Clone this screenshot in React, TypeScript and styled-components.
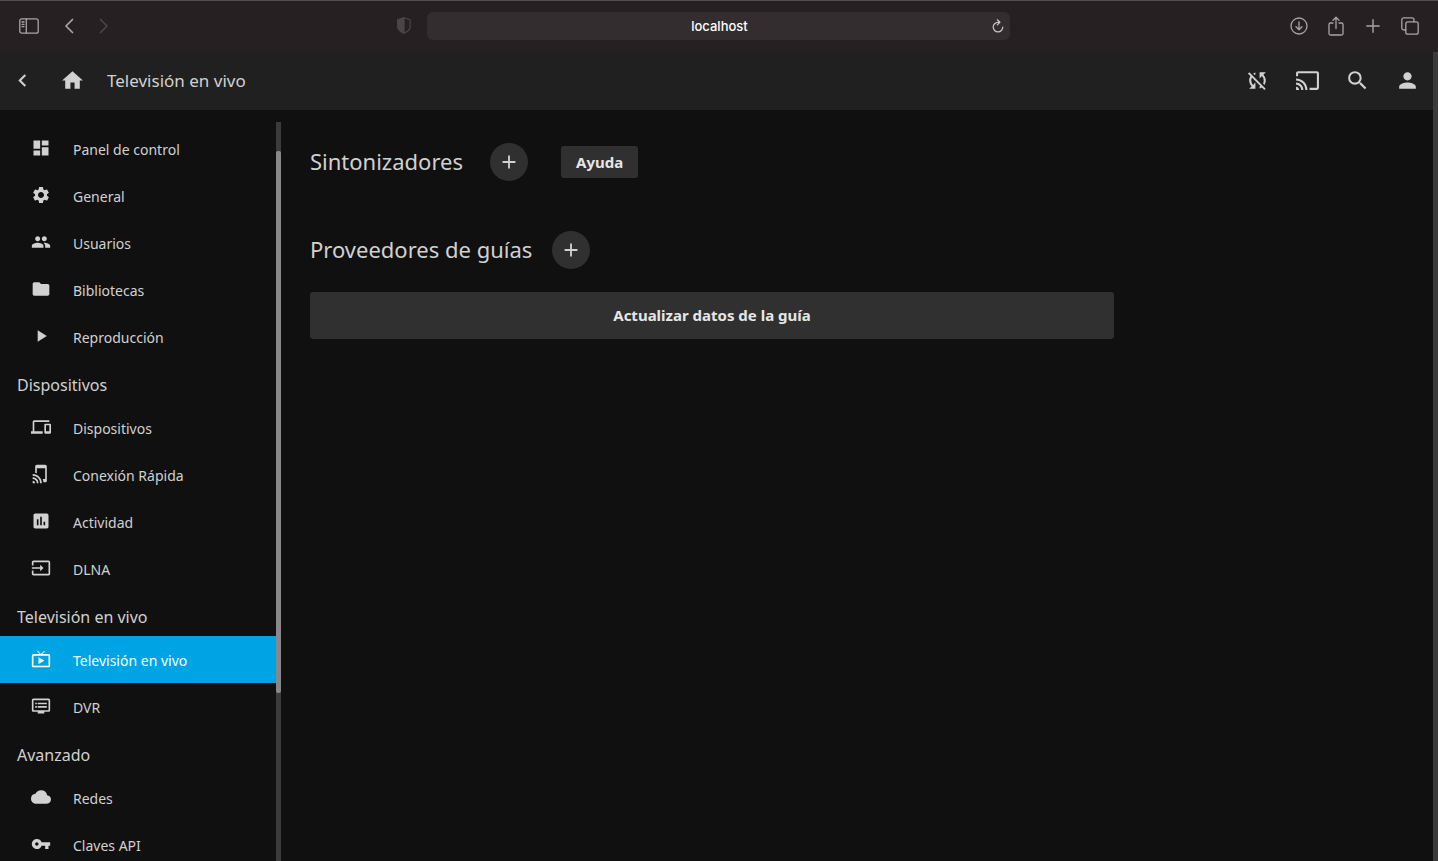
import React from 'react';
import styled, { createGlobalStyle, css } from 'styled-components';
import type { IconType } from 'react-icons';
import {
  MdAdd,
  MdAssessment,
  MdCast,
  MdChevronLeft,
  MdCloud,
  MdDashboard,
  MdDevices,
  MdDvr,
  MdFolder,
  MdHome,
  MdInput,
  MdLiveTv,
  MdPeople,
  MdPerson,
  MdPlayArrow,
  MdSearch,
  MdSettings,
  MdSyncDisabled,
  MdTapAndPlay,
  MdVpnKey,
} from 'react-icons/md';

const GlobalStyle = createGlobalStyle`
  * { box-sizing: border-box; }
  body {
    margin: 0;
    background: #101010;
    color: #d1d1d1;
    font-family: 'Noto Sans', sans-serif;
  }
  button { font-family: inherit; color: inherit; border: 0; padding: 0; background: none; cursor: pointer; }
  h1, h2, ul { margin: 0; padding: 0; font-weight: 400; }
  ul { list-style: none; }
  svg { display: block; }
`;

const Window = styled.div`
  display: flex;
  flex-direction: column;
  height: 100vh;
  overflow: hidden;
`;

/* Browser toolbar */

const Toolbar = styled.div`
  display: grid;
  grid-template-columns: 1fr minmax(200px, 583px) 1fr;
  flex: none;
  align-items: center;
  height: 52px;
  padding: 0 2px 2px 0;
  border-top: 1px solid #504c50;
  background: #262023;
`;

const ToolGroup = styled.div<{ $end?: boolean }>`
  display: flex;
  align-items: center;
  gap: ${(p) => (p.$end ? 16 : 14)}px;
  padding: ${(p) => (p.$end ? '0 16px' : '0 12px 0 18px')};
  justify-content: ${(p) => (p.$end ? 'flex-end' : 'flex-start')};
`;

const ToolButton = styled.button<{ $tone?: 'dim'; $push?: boolean }>`
  display: grid;
  place-items: center;
  width: 21px;
  height: 22px;
  margin-left: ${(p) => (p.$push ? 'auto' : '0')};
  color: ${(p) => (p.$tone ? '#4b4548' : '#a8a4a6')};
`;

const BackButton = styled(ToolButton)`
  margin-left: 5px;
`;

const AddressBar = styled.div`
  display: flex;
  align-items: center;
  height: 28px;
  padding-right: 3px;
  border-radius: 6px;
  background: #332d30;
`;

const Address = styled.input`
  flex: 1;
  min-width: 0;
  padding: 0 0 0 24px;
  border: 0;
  background: none;
  color: #fff;
  font: 500 13px/20px Inter, sans-serif;
  text-align: center;
`;

const ReloadButton = styled(ToolButton)`
  width: 18px;
  color: #c9c6c8;
`;

/* Page */

const Page = styled.div`
  display: flex;
  flex: 1;
  min-height: 0;
`;

const Screen = styled.div`
  display: flex;
  flex-direction: column;
  flex: 1;
  min-width: 0;
`;

const PageScrollbar = styled.div`
  flex: none;
  width: 5px;
  background: #3b3b3b;
`;

const Header = styled.header`
  display: flex;
  flex: none;
  align-items: center;
  justify-content: space-between;
  height: 58px;
  padding: 0 8px 1px 5px;
  background: #202020;
`;

const HeaderSide = styled.div`
  display: flex;
  align-items: center;
  gap: 15px;
`;

const HeaderButton = styled.button`
  display: grid;
  place-items: center;
  width: 35px;
  height: 35px;
`;

const Title = styled.h1`
  padding-left: 2px;
  font-size: 17px;
  line-height: 24px;
`;

const Body = styled.div`
  display: flex;
  flex: 1;
  min-height: 0;
  padding-top: 12px;
`;

const Sidebar = styled.nav`
  flex: none;
  width: 276px;
  padding-top: 3px;
  overflow: hidden;
`;

const SidebarTrack = styled.div`
  flex: none;
  width: 5px;
  padding-top: 29px;
  background: #3b3b3b;
`;

const SidebarThumb = styled.div`
  height: 77%;
  max-height: 542px;
  border-radius: 2px;
  background: #888;
`;

const SectionTitle = styled.h2`
  padding: 13px 17px 7px;
  font-size: 16px;
  line-height: 24px;
`;

const NavLink = styled.a<{ $active: boolean }>`
  display: flex;
  align-items: center;
  gap: 22px;
  height: 47px;
  padding: 0 0 1px 31px;
  color: inherit;
  font-size: 14px;
  line-height: 20px;
  text-decoration: none;
  ${(p) =>
    p.$active &&
    css`
      background: #00a4e4;
      color: #fff;
    `}
`;

const NavLabel = styled.span`
  padding-top: 4px;
`;

const Main = styled.main`
  flex: 1;
  min-width: 0;
  padding: 21px 29px;
`;

const Content = styled.div`
  max-width: 804px;
`;

const SectionRow = styled.div<{ $gap: number }>`
  display: flex;
  align-items: center;
  gap: ${(p) => p.$gap}px;
  height: 38px;
`;

const Heading = styled.h2`
  padding-bottom: 3px;
  font-size: 22px;
  line-height: 32px;
`;

const RoundButton = styled.button`
  display: grid;
  place-items: center;
  width: 38px;
  height: 38px;
  border-radius: 50%;
  background: #303030;
`;

const TextButton = styled.button`
  height: 32px;
  padding: 0 15px;
  border-radius: 3px;
  background: #303030;
  color: #e6e6e6;
  font-size: 15px;
  font-weight: 700;
  line-height: 20px;
`;

const HelpButton = styled(TextButton)`
  margin-left: 6px;
`;

const Tuners = styled.section`
  margin-bottom: 50px;
`;

const RefreshButton = styled(TextButton)`
  width: 100%;
  height: 47px;
  margin-top: 23px;
  padding-bottom: 1px;
`;

const line = { fill: 'none', stroke: 'currentColor', strokeLinecap: 'round', strokeLinejoin: 'round' } as const;

const SidebarGlyph = () => (
  <svg width="20" height="16" viewBox="0 0 20 16" {...line} strokeWidth="1.3">
    <rect x="0.8" y="0.8" width="18.4" height="14.4" rx="2" />
    <path d="M7.3 1v14M3 4h2M3 6.3h2M3 8.6h2" />
  </svg>
);

const ChevronGlyph = ({ right = false }: { right?: boolean }) => (
  <svg width="10" height="16" viewBox="0 0 10 16" {...line} strokeWidth="1.7">
    <path d={right ? 'M1.5 1.5 8 8l-6.5 6.5' : 'M8.5 1.5 2 8l6.5 6.5'} />
  </svg>
);

const ShieldGlyph = () => (
  <svg width="14" height="17" viewBox="0 0 14 17" {...line} strokeWidth="1.2">
    <path d="M7 .8 13.2 2.7v7C13.2 13 9.5 15 7 16.2 4.5 15 .8 13 .8 9.7v-7z" />
    <path d="M7 .8v15.4C4.5 15 .8 13 .8 9.7v-7z" fill="currentColor" />
  </svg>
);

const ReloadGlyph = () => (
  <svg width="12" height="14" viewBox="0 0 12 14" {...line} strokeWidth="1.2">
    <path d="M7.500 3.300H6a4.800 4.800 0 1 0 4.800 4.800M5.300.8l2.600 2.500-2.600 2.600" />
  </svg>
);

const DownloadGlyph = () => (
  <svg width="18" height="18" viewBox="0 0 18 18" {...line} strokeWidth="1.3">
    <circle cx="9" cy="9" r="8" />
    <path d="M9 5v7.500M6 9.700l3 3 3-3" />
  </svg>
);

const ShareGlyph = () => (
  <svg width="16" height="20" viewBox="0 0 16 20" {...line} strokeWidth="1.3">
    <path d="M5 7H2.500A1.500 1.500 0 0 0 1 8.500v9A1.500 1.500 0 0 0 2.500 19h11a1.500 1.500 0 0 0 1.500-1.500v-9A1.500 1.500 0 0 0 13.500 7H11M8 12.500V1.500M5 4.300l3-3 3 3" />
  </svg>
);

const PlusGlyph = () => (
  <svg width="14" height="14" viewBox="0 0 14 14" {...line} strokeWidth="1.4">
    <path d="M7 .8v12.400M.8 7h12.400" />
  </svg>
);

const TabsGlyph = () => (
  <svg width="18" height="18" viewBox="0 0 18 18" {...line} strokeWidth="1.3">
    <rect x="4.800" y="4.800" width="12.400" height="12.400" rx="2" />
    <path d="M4.800 13H2.800a2 2 0 0 1-2-2V2.800a2 2 0 0 1 2-2H11a2 2 0 0 1 2 2v2" />
  </svg>
);

interface NavItem {
  label: string;
  icon: IconType;
  active?: boolean;
}

const sections: { title?: string; items: NavItem[] }[] = [
  {
    items: [
      { label: 'Panel de control', icon: MdDashboard },
      { label: 'General', icon: MdSettings },
      { label: 'Usuarios', icon: MdPeople },
      { label: 'Bibliotecas', icon: MdFolder },
      { label: 'Reproducción', icon: MdPlayArrow },
    ],
  },
  {
    title: 'Dispositivos',
    items: [
      { label: 'Dispositivos', icon: MdDevices },
      { label: 'Conexión Rápida', icon: MdTapAndPlay },
      { label: 'Actividad', icon: MdAssessment },
      { label: 'DLNA', icon: MdInput },
    ],
  },
  {
    title: 'Televisión en vivo',
    items: [
      { label: 'Televisión en vivo', icon: MdLiveTv, active: true },
      { label: 'DVR', icon: MdDvr },
    ],
  },
  {
    title: 'Avanzado',
    items: [
      { label: 'Redes', icon: MdCloud },
      { label: 'Claves API', icon: MdVpnKey },
    ],
  },
];

const BrowserToolbar = () => (
  <Toolbar>
    <ToolGroup>
      <ToolButton aria-label="Barra lateral"><SidebarGlyph /></ToolButton>
      <BackButton aria-label="Atrás"><ChevronGlyph /></BackButton>
      <ToolButton aria-label="Adelante" $tone="dim"><ChevronGlyph right /></ToolButton>
      <ToolButton aria-label="Privacidad" $tone="dim" $push><ShieldGlyph /></ToolButton>
    </ToolGroup>
    <AddressBar>
      <Address aria-label="Dirección" defaultValue="localhost" />
      <ReloadButton aria-label="Recargar"><ReloadGlyph /></ReloadButton>
    </AddressBar>
    <ToolGroup $end>
      <ToolButton aria-label="Descargas"><DownloadGlyph /></ToolButton>
      <ToolButton aria-label="Compartir"><ShareGlyph /></ToolButton>
      <ToolButton aria-label="Nueva pestaña"><PlusGlyph /></ToolButton>
      <ToolButton aria-label="Pestañas"><TabsGlyph /></ToolButton>
    </ToolGroup>
  </Toolbar>
);

export default function App() {
  return (
    <Window>
      <GlobalStyle />
      <BrowserToolbar />
      <Page>
        <Screen>
          <Header>
            <HeaderSide>
              <HeaderButton aria-label="Volver"><MdChevronLeft size={25} /></HeaderButton>
              <HeaderButton aria-label="Inicio"><MdHome size={25} /></HeaderButton>
              <Title>Televisión en vivo</Title>
            </HeaderSide>
            <HeaderSide>
              <HeaderButton aria-label="SyncPlay"><MdSyncDisabled size={25} /></HeaderButton>
              <HeaderButton aria-label="Enviar"><MdCast size={25} /></HeaderButton>
              <HeaderButton aria-label="Buscar"><MdSearch size={25} /></HeaderButton>
              <HeaderButton aria-label="Usuario"><MdPerson size={25} /></HeaderButton>
            </HeaderSide>
          </Header>
          <Body>
            <Sidebar>
              {sections.map((section, i) => (
                <section key={i}>
                  {section.title && <SectionTitle>{section.title}</SectionTitle>}
                  <ul>
                    {section.items.map(({ label, icon: Icon, active = false }) => (
                      <li key={label}>
                        <NavLink href="#" $active={active}>
                          <Icon size={20} />
                          <NavLabel>{label}</NavLabel>
                        </NavLink>
                      </li>
                    ))}
                  </ul>
                </section>
              ))}
            </Sidebar>
            <SidebarTrack><SidebarThumb /></SidebarTrack>
            <Main>
              <Content>
                <Tuners>
                  <SectionRow $gap={27}>
                    <Heading>Sintonizadores</Heading>
                    <RoundButton aria-label="Añadir sintonizador"><MdAdd size={22} /></RoundButton>
                    <HelpButton>Ayuda</HelpButton>
                  </SectionRow>
                </Tuners>
                <section>
                  <SectionRow $gap={20}>
                    <Heading>Proveedores de guías</Heading>
                    <RoundButton aria-label="Añadir proveedor"><MdAdd size={22} /></RoundButton>
                  </SectionRow>
                  <RefreshButton>Actualizar datos de la guía</RefreshButton>
                </section>
              </Content>
            </Main>
          </Body>
        </Screen>
        <PageScrollbar />
      </Page>
    </Window>
  );
}
